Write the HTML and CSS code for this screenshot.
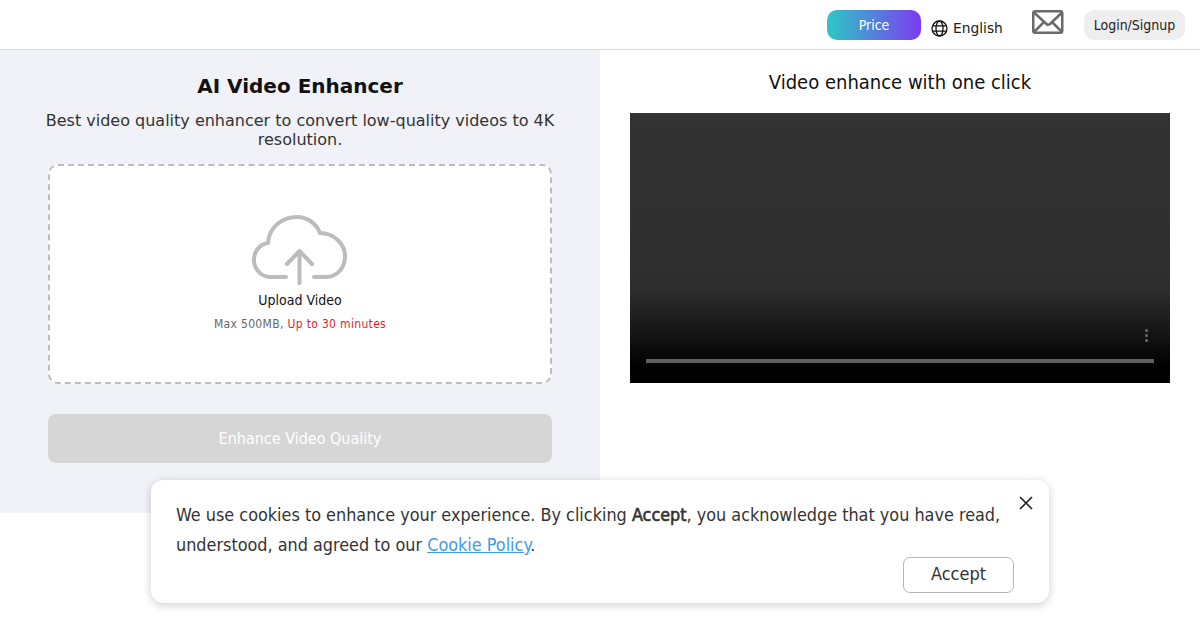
FILE: index.html
```html
<!DOCTYPE html>
<html lang="en">
<head>
<meta charset="utf-8">
<title>AI Video Enhancer</title>
<link rel="stylesheet" href="styles.css">
</head>
<body>
<header class="topbar">
  <a class="price">Price</a>
  <div class="lang">
    <svg class="globe" width="17" height="17" viewBox="0 0 17 17" fill="none" stroke="#111" stroke-width="1.300"><circle cx="8.500" cy="8.500" r="7.500"/><ellipse cx="8.500" cy="8.500" rx="3.500" ry="7.500"/><path d="M1.800 5.800h13.400M1.800 11.200h13.400"/></svg>
    <span>English</span>
  </div>
  <svg class="mail" width="32" height="24" viewBox="0 0 32 24" fill="none" stroke="#6a6a6a" stroke-width="2.500" stroke-linejoin="round"><rect x="1.250" y="1.250" width="29" height="21.500" rx="2"/><path d="M2 2.500l12.500 11.500c1 .9 2.500 .9 3.500 0L30 2.500M2 22l10.500-10.500M30 22l-10.500-10.500"/></svg>
  <a class="login">Login/Signup</a>
</header>
<main class="page">
  <section class="left">
    <h1>AI Video Enhancer</h1>
    <p class="sub">Best video quality enhancer to convert low-quality videos to 4K resolution.</p>
    <div class="drop">
      <svg class="cloud" width="96" height="72" viewBox="0 0 96 72" fill="none" stroke="#bcbcbc" stroke-width="4" stroke-linecap="round" stroke-linejoin="round"><path d="M34 62H19C9 62 2 54 2 45C2 36 8 29 16 28C17 13 29 2 45 2C55 2 64 8 68 18C82 18 93 29 93 41C93 53 85 62 74 62H62"/><path d="M47.500 68V36M35 49L47.500 36L60 49"/></svg>
      <div class="up">Upload Video</div>
      <div class="limit">Max 500MB, <span class="red">Up to 30 minutes</span></div>
    </div>
    <button class="go">Enhance Video Quality</button>
  </section>
  <section class="right">
    <h2>Video enhance with one click</h2>
    <div class="player">
      <div class="dots"><i></i><i></i><i></i></div>
      <div class="track"></div>
    </div>
  </section>
</main>
<aside class="cookie">
  <svg class="close" width="14" height="14" viewBox="0 0 14 14" fill="none" stroke="#222" stroke-width="1.700"><path d="M1 1l12 12M13 1L1 13"/></svg>
  <p>We use cookies to enhance your experience. By clicking <b>Accept</b>, you acknowledge that you have read, understood, and agreed to our <a>Cookie Policy</a>.</p>
  <button class="accept">Accept</button>
</aside>
</body>
</html>
```
FILE: styles.css
```css
* { box-sizing: border-box; }
html, body { margin: 0; height: 628px; overflow: hidden; background: #fff; }
body { font-family: "DejaVu Sans", sans-serif; color: #000; }
.topbar { height: 50px; border-bottom: 1px solid #d8d8d8; display: flex; align-items: flex-start; padding: 10px 15px 0 0; justify-content: flex-end; }
.price { width: 94px; height: 30px; border-radius: 10px; background: linear-gradient(90deg, #2cc8c5, #7c3bf2); color: #fff; font: 14px/30px "DejaVu Sans Condensed", sans-serif; text-align: center; }
.lang { display: flex; align-items: center; margin: 8px 0 0 10px; width: 73px; font-size: 13.800px; gap: 5px; color: #222; height: 20px; }
.globe { flex: none; margin-top: 1px; }
.mail { margin: 0 20px 0 28px; }
.login { width: 101px; height: 30px; border-radius: 10px; background: #eeeeee; color: #222; font: 14px/30px "DejaVu Sans Condensed", sans-serif; text-align: center; }
.page { display: flex; align-items: flex-start; }
.left { width: 600px; height: 463px; background: #f0f2f7; padding: 24px 48px 0; text-align: center; }
h1 { margin: 0 -20px; font-size: 20px; line-height: 25px; font-weight: 700; color: #111; }
.sub { margin: 12px -20px 0; font-size: 16px; line-height: 19px; color: #333; }
.drop { margin-top: 15px; height: 220px; background: #fff; border: 2px dashed #bdbdbd; border-radius: 10px; display: flex; flex-direction: column; align-items: center; padding-top: 49px; }
.cloud { display: block; }
.up { font: 14px/20px "DejaVu Sans Condensed", sans-serif; margin-top: 3px; color: #111; }
.limit { font: 12px/16px "DejaVu Sans Condensed", sans-serif; letter-spacing: .33px; margin-top: 6px; color: #666; }
.red { color: #df1f2d; }
.go { display: block; width: 100%; height: 49px; margin-top: 30px; border: 0; border-radius: 8px; background: #d6d6d6; color: #fff; font: 16px "DejaVu Sans Condensed", sans-serif; }
.right { width: 600px; padding: 18px 30px 0; }
h2 { margin: 0; font: 400 20px/28px "DejaVu Sans Condensed", sans-serif; text-align: center; color: #111; }
.player { position: relative; margin-top: 17px; height: 270px; background: linear-gradient(180deg, #333 0, #2e2e2e 65%, #000 95%); }
.track { position: absolute; left: 16px; right: 16px; bottom: 20px; height: 4px; background: #606060; }
.dots { position: absolute; right: 22px; bottom: 41px; display: flex; flex-direction: column; gap: 2px; }
.dots i { display: block; width: 3px; height: 3px; border-radius: 50%; background: #6e6e6e; }
.cookie { position: absolute; left: 151px; top: 480px; width: 898px; height: 123px; background: #fff; border-radius: 12px; box-shadow: 0 2px 10px rgba(0,0,0,.2); padding: 20px 25px; }
.cookie p { margin: 0; font: 17.850px/30px "DejaVu Sans Condensed", sans-serif; color: #333; }
.cookie b { font-weight: 400; -webkit-text-stroke: .6px #333; }
.cookie a { color: #3f9ae8; text-decoration: underline; }
.close { position: absolute; right: 16px; top: 16px; }
.accept { position: absolute; right: 35px; top: 77px; width: 111px; height: 36px; background: #fff; border: 1px solid #b5b5b5; border-radius: 7px; font: 18px "DejaVu Sans Condensed", sans-serif; color: #333; padding: 0 0 4px; }
```
